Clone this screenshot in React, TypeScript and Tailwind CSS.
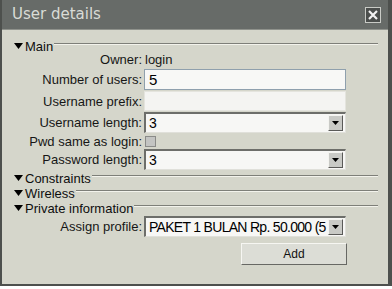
import React from 'react';

const labelCls =
  "w-[141px] shrink-0 text-right pr-[1px] text-[13px] leading-none text-[#161616]";
const valueFont = "font-['Liberation_Sans',Arial,sans-serif]";

function Arrow() {
  return (
    <div className="w-[15px] h-[16px] shrink-0 bg-[#c9cac6] border border-t-[#f4f4f0] border-l-[#f4f4f0] border-r-[#5a5a58] border-b-[#5a5a58] flex items-center justify-center">
      <svg width="7" height="4" viewBox="0 0 7 4">
        <path d="M0 0 H7 L3.5 4 Z" fill="#000" />
      </svg>
    </div>
  );
}

function Section({ title, className = '' }: { title: string; className?: string }) {
  return (
    <div className={`flex items-center h-[14px] pl-[12px] pr-[10px] ${className}`}>
      <svg width="9" height="6" viewBox="0 0 9 6" className="mr-[2px]">
        <path d="M0 0 H9 L4.5 6 Z" fill="#000" />
      </svg>
      <span className="text-[13px] leading-none text-[#0e0e0e]">{title}</span>
      <div className="flex-1 ml-[1px] mb-[4px] h-[2px] border-t border-t-[#7e7f79] border-b border-b-[#f3f3ec]" />
    </div>
  );
}

function Select({ value, className = '' }: { value: string; className?: string }) {
  return (
    <div
      className={`w-[202px] h-[21px] bg-[#f7f7f5] border-t-2 border-l-2 border-t-[#6d6e6a] border-l-[#6d6e6a] border-r border-b border-r-[#e0e0da] border-b-[#e0e0da] flex items-center pl-[3px] pr-[2px] ${className}`}
    >
      <span className={`flex-1 whitespace-nowrap text-[14px] tracking-[-0.7px] leading-none text-black ${valueFont}`}>
        {value}
      </span>
      <Arrow />
    </div>
  );
}

export default function App() {
  return (
    <div className={`w-[392px] h-[289px] bg-white ${valueFont}`}>
      <div className="h-[286px] bg-[#d5d6cb] border-l-2 border-r-[4px] border-b-2 border-[#4d504d] flex flex-col">
        <div className="h-[30px] shrink-0 bg-[#676b68] border-b border-[#8f928c] flex items-center justify-between pl-[10px] pr-[7px]">
          <span className="text-[15px] text-[#d9dbd6] font-['DejaVu_Sans',sans-serif]">User details</span>
          <div className="w-[16px] h-[16px] bg-[#4b4e4c] border border-[#c9cbc6] flex items-center justify-center">
            <svg width="10" height="10" viewBox="0 0 10 10">
              <path d="M1 1 L9 9 M9 1 L1 9" stroke="#f2f2f2" strokeWidth="2.2" />
            </svg>
          </div>
        </div>

        <Section title="Main" className="mt-[9px]" />

        <div className="flex items-center h-[13px]">
          <span className={labelCls}>Owner:</span>
          <span className="text-[13px] leading-none text-[#161616] pl-[2px]">login</span>
        </div>

        <div className="flex items-center mt-[3px]">
          <span className={labelCls}>Number of users:</span>
          <div className="ml-[1px] w-[202px] h-[21px] bg-[#f8f8f6] border border-[#8fa0ad] flex items-center pl-[4px]">
            <span className="text-[15px] leading-none text-black">5</span>
          </div>
        </div>

        <div className="flex items-center mt-[1px]">
          <span className={labelCls}>Username prefix:</span>
          <div className="ml-[1px] w-[202px] h-[20px] bg-[#f4f4f2] border border-[#e4e4de]" />
        </div>

        <div className="flex items-center mt-[1px]">
          <span className={labelCls}>Username length:</span>
          <Select value="3" className="ml-[1px]" />
        </div>

        <div className="flex items-center h-[16px]">
          <span className={labelCls}>Pwd same as login:</span>
          <div className="ml-[2px] w-[11px] h-[11px] bg-[#c3c4c2] border border-[#8a8b88]" />
        </div>

        <div className="flex items-center">
          <span className={labelCls}>Password length:</span>
          <Select value="3" className="ml-[1px]" />
        </div>

        <Section title="Constraints" className="mt-[1px]" />
        <Section title="Wireless" className="mt-[1px]" />
        <Section title="Private information" className="mt-[1px]" />

        <div className="flex items-center mt-[1px]">
          <span className={labelCls}>Assign profile:</span>
          <Select value="PAKET 1 BULAN Rp. 50.000 (5" className="ml-[1px]" />
        </div>

        <div className="flex mt-[6px] pl-[239px]">
          <button className="w-[106px] h-[22px] bg-[#dcddd6] border border-t-[#f6f6f2] border-l-[#f6f6f2] border-r-[#676864] border-b-[#676864] text-[12px] leading-none text-[#111]">
            Add
          </button>
        </div>
      </div>
    </div>
  );
}
